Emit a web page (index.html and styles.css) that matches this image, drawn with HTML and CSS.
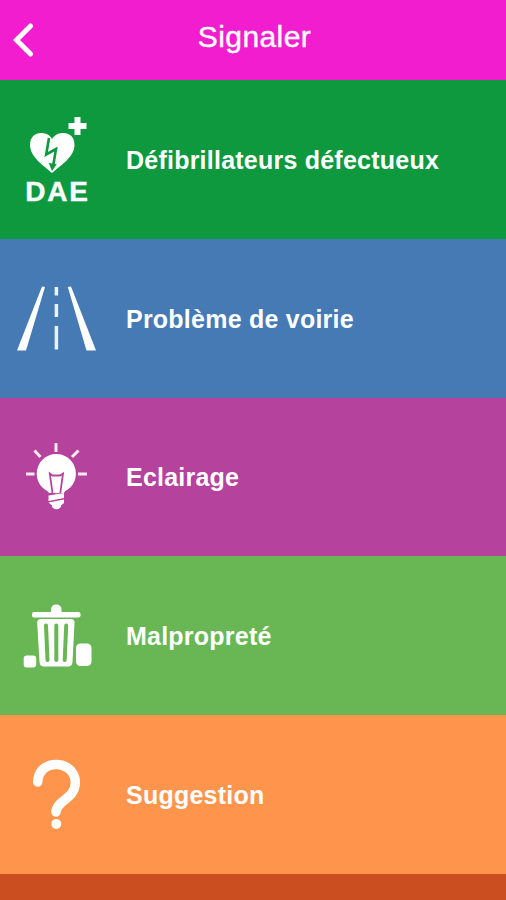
FILE: index.html
```html
<!DOCTYPE html>
<html lang="fr">
<head>
  <meta charset="UTF-8">
  <title>Signaler</title>
  <link rel="stylesheet" href="styles.css">
</head>
<body>

<header class="header">
  <svg class="back" viewBox="0 0 24 40">
    <path d="M17.5 8 L3.5 22 L17.5 36"/>
  </svg>
  <h1>Signaler</h1>
</header>

<main class="menu">
  <div class="item dae">
    <svg class="icon" viewBox="0 0 112 158">
      <path d="M52 93 C44 86 30 77 30 65 C30 57 35 53 41 53 C46 53 50 55 52 59 C55 55 58 53 63 53 C70 53 74.5 57 74.5 65 C74.5 77 60 86 52 93 Z"/>
      <path class="bolt" d="M49 58 L46.2 74.5 L56 69 L53 87"/>
      <path class="bolt-tip" d="M48.8 83 L56.8 84 L52 91 Z"/>
      <path d="M74.5 37 H80.5 V43 H86.5 V49 H80.5 V55 H74.5 V49 H68.5 V43 H74.5 Z"/>
      <text class="icon-text" x="25.2" y="121">DAE</text>
    </svg>
    <span class="label">Défibrillateurs défectueux</span>
  </div>

  <div class="item voirie">
    <svg class="icon" viewBox="0 0 112 158">
      <path d="M42 47.5 L45 48 L26 111.5 L17 111.5 Z"/>
      <path d="M67.8 48 L71 47.5 L96 111.5 L86.5 111.5 Z"/>
      <path class="dashes" d="M56.4 48 V56.5 M56.4 65 V78 M56.4 87 V110.5"/>
    </svg>
    <span class="label">Problème de voirie</span>
  </div>

  <div class="item eclairage">
    <svg class="icon" viewBox="0 0 112 158">
      <path class="rays" d="M56 45 V54 M34.5 52.5 L40.5 59 M78.5 52.5 L72 59 M26 76 H34.5 M78 76 H87"/>
      <circle cx="56.3" cy="75.7" r="19.6"/>
      <path d="M43 88 H70 Q65 92 64 95 H49 Q47 92 43 88 Z"/>
      <path class="filament" d="M52.5 95 L49.8 75.5 L52.5 77.5 H60 L63 75.5 L60.3 95"/>
      <path d="M48.5 97.5 L64 95 V100 L48.5 103 Z"/>
      <path d="M48.5 104.5 L64 101.5 V105 L61 107.5 V109 Q56.5 113.5 52 109 V107.5 Z"/>
    </svg>
    <span class="label">Eclairage</span>
  </div>

  <div class="item proprete">
    <svg class="icon" viewBox="0 0 112 158">
      <path d="M51 56 V53 Q51 47.5 56.3 47.5 Q61.5 47.5 61.5 53 V56 Z"/>
      <rect x="32" y="55" width="48.5" height="5.5" rx="2"/>
      <path d="M41 62 H71 Q74.7 62 74.5 66 L72.5 105 Q72 109.5 68 109.5 H44 Q40 109.5 39.5 105 L37.2 66 Q37 62 41 62 Z"/>
      <path class="slots" d="M46 68.5 L47.5 103 M56.3 68.5 V103 M66.2 68.5 L64.7 103"/>
      <rect x="23.7" y="98.5" width="12.5" height="12" rx="3"/>
      <rect x="76" y="86.5" width="15.5" height="22.5" rx="4.5"/>
    </svg>
    <span class="label">Malpropreté</span>
  </div>

  <div class="item suggestion">
    <svg class="icon" viewBox="0 0 112 158">
      <path class="question" d="M37.7 67 C38 56 46 49.5 56 49.5 C67 49.5 75.3 57 75.3 67.5 C75.3 84 56.5 85 56 97"/>
      <circle cx="56.3" cy="109" r="5"/>
    </svg>
    <span class="label">Suggestion</span>
  </div>
</main>

</body>
</html>
```

FILE: styles.css
```css
body {
  margin: 0;
  background-color: #cb4e20;
  color: white;
  font-family: "Liberation Sans", Arial, sans-serif;
}
.header {
  display: grid;
  grid-template-columns: 40px 1fr 40px;
  height: 80px;
  background-color: #f31dd0;
}
.back {
  width: 24px;
  height: 40px;
  margin: 18px 0 0 13px;
  fill: none;
  stroke: white;
  stroke-width: 5;
  stroke-linecap: round;
}
h1 {
  margin: 19px 0 0 3px;
  text-align: center;
  font-size: 30px;
  font-weight: normal;
  letter-spacing: 0.4px;
  line-height: 36px;
  -webkit-text-stroke: 0.4px white;
}
.item {
  display: flex;
  align-items: center;
  height: 158.75px;
}
.icon {
  width: 112px;
  height: 158px;
  margin-right: 14px;
  fill: white;
}
.icon-text {
  font-size: 28px;
  font-weight: bold;
  letter-spacing: 1.8px;
  stroke: white;
  stroke-width: 0.4;
}
.label {
  padding-top: 2px;
  font-size: 25px;
  font-weight: bold;
  letter-spacing: 0.23px;
}
.dae {
  background-color: #0e993f;
}
.voirie {
  background-color: #457ab4;
}
.eclairage {
  background-color: #b5429d;
}
.proprete {
  background-color: #69b754;
}
.suggestion {
  background-color: #ff954c;
}
.bolt {
  fill: none;
  stroke: #0e993f;
  stroke-width: 2.6;
}
.bolt-tip {
  fill: #0e993f;
}
.dashes {
  stroke: #e4f6ff;
  stroke-width: 3.5;
}
.rays {
  stroke: #ffeafa;
  stroke-width: 3;
}
.filament {
  fill: none;
  stroke: #b5429d;
  stroke-width: 1.8;
}
.slots {
  stroke: #69b754;
  stroke-width: 4;
  stroke-linecap: round;
}
.question {
  fill: none;
  stroke: white;
  stroke-width: 9.5;
  stroke-linecap: round;
}
```
